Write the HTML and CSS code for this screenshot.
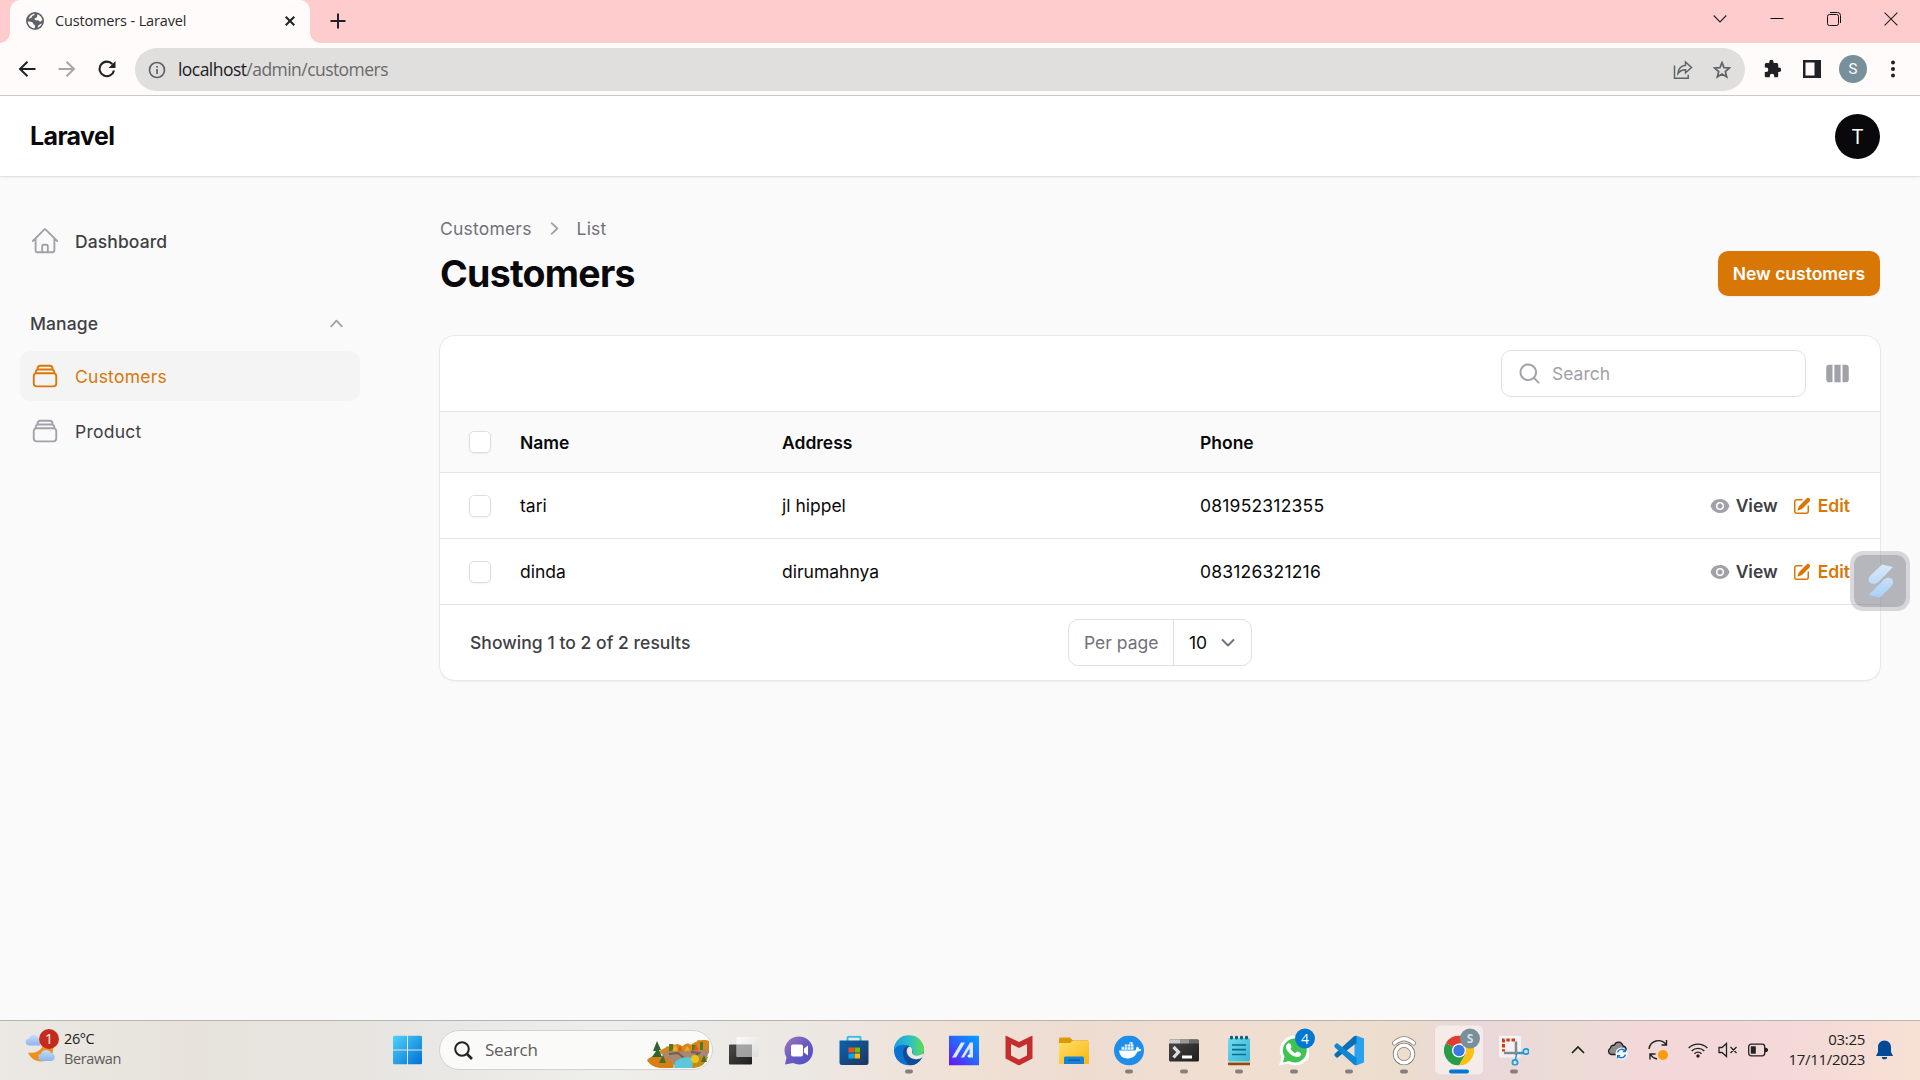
FILE: index.html
```html
<!DOCTYPE html>
<html lang="en">
<head>
<meta charset="utf-8">
<title>Customers - Laravel</title>
<link rel="stylesheet" href="styles.css">
</head>
<body>
<svg class="defs" width="0" height="0">
  <defs>
    <symbol id="stack" viewBox="0 0 24 24"><path fill="none" stroke="currentColor" stroke-width="1.5" stroke-linecap="round" stroke-linejoin="round" d="M6 6.878V6a2.25 2.25 0 012.25-2.25h7.5A2.25 2.25 0 0118 6v.878m-12 0c.235-.083.487-.128.75-.128h10.5c.263 0 .515.045.75.128m-12 0A2.25 2.25 0 004.5 9v.878m13.5-3A2.25 2.25 0 0119.5 9v.878m0 0a2.246 2.246 0 00-.75-.128H5.25c-.263 0-.515.045-.75.128m15 0A2.25 2.25 0 0121 12v6a2.25 2.25 0 01-2.25 2.25H5.25A2.25 2.25 0 013 18v-6c0-.98.626-1.813 1.5-2.122"/></symbol>
    <symbol id="eye" viewBox="0 0 20 20"><path d="M10 12.5a2.5 2.5 0 100-5 2.5 2.5 0 000 5z"/><path fill-rule="evenodd" d="M.664 10.59a1.651 1.651 0 010-1.186A10.004 10.004 0 0110 3c4.257 0 7.893 2.66 9.336 6.41.147.381.146.804 0 1.186A10.004 10.004 0 0110 17c-4.257 0-7.893-2.66-9.336-6.41zM14 10a4 4 0 11-8 0 4 4 0 018 0z"/></symbol>
    <symbol id="pencil" viewBox="0 0 20 20"><path d="M5.433 13.917l1.262-3.155A4 4 0 017.58 9.42l6.92-6.918a2.121 2.121 0 013 3l-6.92 6.918c-.383.383-.84.685-1.343.886l-3.154 1.262a.5.5 0 01-.65-.65z"/><path d="M3.5 5.75c0-.69.56-1.25 1.25-1.25H10A.75.75 0 0010 3H4.75A2.75 2.75 0 002 5.75v9.5A2.75 2.75 0 004.75 18h9.5A2.75 2.75 0 0017 15.25V10a.75.75 0 00-1.5 0v5.25c0 .69-.56 1.25-1.25 1.25h-9.5c-.69 0-1.25-.56-1.25-1.25v-9.5z"/></symbol>
    <linearGradient id="gWin" x1="0" y1="0" x2="1" y2="1"><stop offset="0" stop-color="#4fd3fb"/><stop offset="1" stop-color="#0070d2"/></linearGradient>
    <linearGradient id="gDark" x1="0" y1="0" x2="1" y2="1"><stop offset="0" stop-color="#4a4a4a"/><stop offset="1" stop-color="#1d1d1d"/></linearGradient>
    <linearGradient id="gLight" x1="0" y1="0" x2="1" y2="1"><stop offset="0" stop-color="#ffffff"/><stop offset="1" stop-color="#dcdcdc"/></linearGradient>
    <linearGradient id="gChat" x1="0" y1="0" x2="1" y2="1"><stop offset="0" stop-color="#a07ab8"/><stop offset=".5" stop-color="#6a5bc0"/><stop offset="1" stop-color="#4a4fc4"/></linearGradient>
    <linearGradient id="gStore" x1="0" y1="0" x2="1" y2="1"><stop offset="0" stop-color="#0a63b0"/><stop offset="1" stop-color="#1f355c"/></linearGradient>
    <linearGradient id="gEdge" x1="0" y1="0" x2="1" y2="0"><stop offset="0" stop-color="#1b9de2"/><stop offset=".55" stop-color="#2fc0c4"/><stop offset="1" stop-color="#62dd4c"/></linearGradient>
    <linearGradient id="gMa" x1="1" y1="0" x2="0" y2="1"><stop offset="0" stop-color="#00a5ff"/><stop offset=".5" stop-color="#2a62ff"/><stop offset="1" stop-color="#6a12f0"/></linearGradient>
    <linearGradient id="gFold" x1="0" y1="0" x2="1" y2="1"><stop offset="0" stop-color="#ffdf6a"/><stop offset="1" stop-color="#fbb60c"/></linearGradient>
    <linearGradient id="gNote" x1="0" y1="0" x2="1" y2="1"><stop offset="0" stop-color="#6fdcee"/><stop offset="1" stop-color="#38b4d4"/></linearGradient>
    <linearGradient id="gBlade" x1="0" y1="0" x2="0" y2="1"><stop offset="0" stop-color="#d9e9f8"/><stop offset="1" stop-color="#a9d0f7"/></linearGradient>
    <linearGradient id="gCloud" x1="0" y1="0" x2="0" y2="1"><stop offset="0" stop-color="#c3dcfa"/><stop offset="1" stop-color="#8fb4ea"/></linearGradient>
  </defs>
</svg>

<div class="browser">
  <div class="tabstrip">
    <div class="tab">
      <svg class="favicon" width="18" height="18" viewBox="0 0 18 18"><circle cx="9" cy="9" r="9" fill="#5f6368"/><path fill="#fff9f8" d="M1.800 9.500c2 .1 3.800.2 4.700 1 .9.700.6 1.600 1.300 2.100.8.300 1.300.5 1.200 1.500l-.2 2.200C5 16.300 2 13.200 1.800 9.500zM8.800 1.700c-.3 1.500-1.200 1.600-2.300 2.100-1 .6-.5 1.700-1.500 2.200-1 .3-1.800.600-2.300 1C3.400 4 5.800 1.900 8.800 1.700zM11.500 2.200c2.600.9 4.600 3.200 4.800 6.100-.8.200-1.200 1.400-2.200 1.300-1.200-.2-1.300-1.300-2.500-1.300-1.300.1-2.900.100-3-1.300-.1-1.300 1.100-1.200 2-1.600.9-.6.300-1.900.9-3.200zM15.800 11.500c-.7 2-2 3.500-4 4.300 0-1.300.2-2.300 1.200-2.900 1-.6 1.700-1.100 2.800-1.400z"/></svg>
      <span class="tab-title">Customers - Laravel</span>
      <svg class="tab-close" width="10" height="10" viewBox="0 0 10 10"><path d="M.7.700l8.600 8.600M9.300.700L.7 9.300" stroke="#202124" stroke-width="2"/></svg>
    </div>
    <svg class="newtab" width="16" height="16" viewBox="0 0 16 16"><path d="M8 .5v15M.5 8h15" stroke="#202124" stroke-width="2"/></svg>
    <div class="winctl">
      <svg width="14" height="14" viewBox="0 0 14 14"><path d="M.7 3.500L7 10l6.300-6.500" fill="none" stroke="#222" stroke-width="1.100"/></svg>
      <svg width="14" height="14" viewBox="0 0 14 14"><path d="M.5 6.500h13" stroke="#111"/></svg>
      <svg width="14" height="14" viewBox="0 0 14 14"><rect x=".5" y="2.500" width="11" height="11" rx="2" fill="none" stroke="#111"/><path d="M3 .5h7.500a3 3 0 013 3V11" fill="none" stroke="#111"/></svg>
      <svg width="14" height="14" viewBox="0 0 14 14"><path d="M.6.600l12.800 12.800M13.400.600L.6 13.400" stroke="#222" stroke-width="1.100"/></svg>
    </div>
  </div>
  <div class="toolbar">
    <div class="navbtns">
      <svg width="18" height="18" viewBox="0 0 18 18"><path d="M9.500 1.700L2 9l7.500 7.300M2 9h15.500" fill="none" stroke="#202124" stroke-width="2"/></svg>
      <svg width="18" height="18" viewBox="0 0 18 18"><path d="M8.500 1.700L16 9l-7.500 7.300M16 9H.5" fill="none" stroke="#a9a5a5" stroke-width="2"/></svg>
      <svg width="18" height="18" viewBox="0 0 18 18"><path d="M14.300 4A7.300 7.300 0 1016 10.500" fill="none" stroke="#202124" stroke-width="2.100"/><path d="M17.500 1v7h-7z" fill="#202124"/></svg>
    </div>
    <div class="omnibox">
      <svg width="18" height="18" viewBox="0 0 18 18"><circle cx="9" cy="9" r="7.500" fill="none" stroke="#5f6368" stroke-width="1.700"/><path d="M8.200 8h1.700v5H8.200zM8.200 5h1.700v1.700H8.200z" fill="#5f6368"/></svg>
      <span class="url">localhost<span class="path">/admin/customers</span></span>
      <svg class="share" width="20" height="20" viewBox="0 0 20 20"><path d="M1.500 5.500v12.700h13.700v-3.500" fill="none" stroke="#5f6368" stroke-width="1.500"/><path d="M12.500 2l6 5.500-6 5.300V9.700C9 9.500 7 10.700 5 13.500c.3-4.500 3-7.700 7.500-8.300z" fill="none" stroke="#5f6368" stroke-width="1.500"/></svg>
      <svg width="18" height="18" viewBox="0 0 18 18"><path d="M9 1.600l2 5 5.500.4-4.200 3.500 1.400 5.500L9 13l-4.700 3 1.400-5.500L1.500 7 7 6.600z" fill="none" stroke="#5f6368" stroke-width="1.700"/></svg>
    </div>
    <div class="actions">
      <svg width="20" height="20" viewBox="0 0 20 20"><path fill="#202124" d="M16 8.500h-.8V5.800c0-1-.7-1.700-1.700-1.700h-2.900V3A2.200 2.200 0 006.200 3v1.100H3.400c-.9 0-1.600.7-1.600 1.700v2.700H3a2.300 2.300 0 010 4.600H1.800v3.600c0 .9.700 1.600 1.600 1.600H6.800V17a2.200 2.200 0 014.400 0v1.300h2.300c1 0 1.700-.7 1.700-1.600v-3.800h.8a2.200 2.200 0 000-4.400z"/></svg>
      <svg width="18" height="18" viewBox="0 0 18 18"><rect width="18" height="18" fill="#202124"/><rect x="2.500" y="2.500" width="9" height="13" fill="#fffafa"/></svg>
      <span class="profile">S</span>
      <svg width="4" height="18" viewBox="0 0 4 18"><g fill="#202124"><circle cx="2" cy="2.500" r="2"/><circle cx="2" cy="9" r="2"/><circle cx="2" cy="15.500" r="2"/></g></svg>
    </div>
  </div>
</div>

<header class="topbar">
  <div class="brand">Laravel</div>
  <div class="avatar">T</div>
</header>

<div class="layout">
  <nav class="sidebar">
    <a class="item">
      <svg width="30" height="30" viewBox="0 0 24 24"><path fill="none" stroke="currentColor" stroke-width="1.500" stroke-linecap="round" stroke-linejoin="round" d="M2.250 12l8.954-8.955c.44-.439 1.152-.439 1.591 0L21.750 12M4.500 9.750v10.125c0 .621.504 1.125 1.125 1.125H9.750v-4.875c0-.621.504-1.125 1.125-1.125h2.250c.621 0 1.125.504 1.125 1.125V21h4.125c.621 0 1.125-.504 1.125-1.125V9.750M8.250 21h8.250"/></svg>
      <span>Dashboard</span>
    </a>
    <div class="group">
      <span>Manage</span>
      <svg width="25" height="25" viewBox="0 0 20 20" fill="#a1a1aa"><path d="M14.770 12.790a.75.75 0 01-1.060-.02L10 8.832 6.290 12.770a.75.75 0 11-1.080-1.040l4.250-4.500a.75.75 0 011.080 0l4.250 4.500a.75.75 0 01-.02 1.060z"/></svg>
    </div>
    <div class="items">
      <a class="item active"><svg width="30" height="30"><use href="#stack"/></svg><span>Customers</span></a>
      <a class="item"><svg width="30" height="30"><use href="#stack"/></svg><span>Product</span></a>
    </div>
  </nav>

  <main class="main">
    <div class="crumbs">
      <span>Customers</span>
      <svg width="25" height="25" viewBox="0 0 20 20" fill="#a1a1aa"><path d="M7.210 14.770a.75.75 0 01.02-1.060L11.168 10 7.230 6.290a.75.75 0 111.040-1.080l4.500 4.250a.75.75 0 010 1.080l-4.500 4.250a.75.75 0 01-1.060-.02z"/></svg>
      <span>List</span>
    </div>
    <div class="heading">
      <h1>Customers</h1>
      <a class="btn">New customers</a>
    </div>

    <section class="card">
      <div class="card-tools">
        <div class="search">
          <svg width="25" height="25" viewBox="0 0 20 20" fill="#a1a1aa"><path fill-rule="evenodd" d="M9 3.500a5.500 5.500 0 100 11 5.500 5.500 0 000-11zM2 9a7 7 0 1112.452 4.391l3.328 3.329a.75.75 0 11-1.060 1.060l-3.329-3.328A7 7 0 012 9z"/></svg>
          <span>Search</span>
        </div>
        <svg width="25" height="25" viewBox="0 0 20 20" fill="#a1a1aa"><path d="M14 17h2.750A2.250 2.250 0 0019 14.750v-9.500A2.250 2.250 0 0016.750 3H14v14zM12.500 3h-5v14h5V3zM3.250 3H6v14H3.250A2.250 2.250 0 011 14.750v-9.500A2.250 2.250 0 013.250 3z"/></svg>
      </div>
      <div class="row head">
        <i class="check"></i><span>Name</span><span>Address</span><span>Phone</span>
      </div>
      <div class="row">
        <i class="check"></i><span>tari</span><span>jl hippel</span><span class="num">081952312355</span>
        <div class="links"><a><svg width="20" height="20"><use href="#eye"/></svg>View</a><a class="edit"><svg width="20" height="20"><use href="#pencil"/></svg>Edit</a></div>
      </div>
      <div class="row">
        <i class="check"></i><span>dinda</span><span>dirumahnya</span><span class="num">083126321216</span>
        <div class="links"><a><svg width="20" height="20"><use href="#eye"/></svg>View</a><a class="edit"><svg width="20" height="20"><use href="#pencil"/></svg>Edit</a></div>
      </div>
      <div class="pager">
        <span>Showing 1 to 2 of 2 results</span>
        <div class="perpage">
          <span class="label">Per page</span>
          <span class="value">10 <svg width="14" height="10" viewBox="0 0 14 10"><path d="M1.500 2l5.500 5.500L12.500 2" fill="none" stroke="#6b7280" stroke-width="1.900" stroke-linecap="round" stroke-linejoin="round"/></svg></span>
        </div>
      </div>
    </section>
  </main>
</div>

<div class="floating">
  <svg width="26" height="34" viewBox="0 0 26 34"><path fill="url(#gBlade)" d="M14 .5l11 2.500L11 17.500c-2 2-4.500 2.600-7 2.300C.500 19-.6 14.500 2 12zM25 17c.3 2.300-.4 4-2 5.500L12 33.500.500 31 15 16.500c2-2 4-3 6.500-2.500 2 .3 3.200 1.400 3.500 3z"/></svg>
</div>

<footer class="taskbar">
  <div class="weather">
    <div class="weather-icon">
      <svg width="34" height="34" viewBox="0 0 34 34"><path d="M4 15.500C-1 15 0 8.500 4 8.500 5.500 4 11.500 4 13.500 8l2 7.500z" fill="url(#gCloud)"/><path d="M3 22.500c7 1.500 13-2 15-7l10 1c1 8-4 15-12 15-6 0-11-4-13-9z" fill="#f0901c"/><path d="M15.500 31a4 4 0 01.500-7.500c1.500-4.500 8.500-4.500 10-.5 4.500-.5 5.500 7.500.500 8z" fill="url(#gCloud)"/></svg>
      <span class="badge red">1</span>
    </div>
    <div class="weather-text"><span>26°C</span><span class="dim">Berawan</span></div>
  </div>

  <div class="dock">
    <svg class="start" width="29" height="29" viewBox="0 0 29 29"><path fill="url(#gWin)" d="M1.500 0H14v14H0V1.500A1.500 1.500 0 011.500 0zM15 0h12.500A1.500 1.500 0 0129 1.500V14H15zM0 15h14v14H1.500A1.500 1.500 0 010 27.500zM15 15h14v12.500a1.500 1.500 0 01-1.500 1.500H15z"/></svg>
    <div class="tsearch">
      <svg width="19" height="19" viewBox="0 0 19 19"><circle cx="8" cy="8" r="6.800" fill="none" stroke="#222" stroke-width="2"/><path d="M13 13l5 5" stroke="#222" stroke-width="2.600"/></svg>
      <span>Search</span>
      <svg class="scene" width="63" height="28" viewBox="0 0 63 28">
        <path d="M12 12c3-4 6-3 8-6 3 2 5-3 8-1 3-3 5 1 8 1 3-3 5-3 8-1 2-3 5-2 7-5 3 1 5-1 8 0l3 1v12c-14 5-32 6-46 2z" fill="#d9861c"/>
        <path d="M22 4h4v9h-4zM45 5h4v7h-4zM53 2h3v9h-3z" fill="#517a22"/><path d="M28 4l4 8h-7zM40 6l4 6h-7z" fill="#e8b11c"/><path d="M33 5l3 7h-6zM49 4l3 7h-6z" fill="#e05a1e"/>
        <path d="M17 12c10-2 16 0 22-1 8 0 15-2 23-1l-2 8-14 7H27L15 17z" fill="#a88873"/><path d="M22 14l9-1 6 5M44 12l8 1-6 5" stroke="#7b5a4c" stroke-width="2" fill="none"/>
        <path d="M0 20c3-4 9-5 14-4 6 1 11 5 13 10l-1 2H13C6 27 2 24 0 20z" fill="#d77e16"/><path d="M40 21c6-5 14-5 21-4-2 6-6 10-14 11h-7z" fill="#c58a16"/>
        <path d="M28 22c4-4 11-6 18-4-3 2 1 4-1 10H27z" fill="#5cc6dc"/>
        <path d="M10 1l4 9h-2l3 7H5l4-6H6z" fill="#2f6430"/><path d="M16 15l3 8h-7zM57 15l3 7h-6z" fill="#3d7032"/><circle cx="48" cy="19" r="4" fill="#e5c51f"/>
      </svg>
    </div>
    <div class="apps">
      <div class="app"><svg width="30" height="30" viewBox="0 0 30 30"><rect y="9" width="23" height="20" rx="1" fill="url(#gDark)"/><rect x="7.500" y="1.500" width="22" height="20" rx="1" fill="url(#gLight)" opacity=".85"/><path d="M7.500 9H23v12.500H7.500z" fill="#8a8a8a" opacity=".65"/></svg></div>
      <div class="app"><svg width="30" height="30" viewBox="0 0 30 30"><path d="M15 1a14 14 0 110 28c-2 0-4-.5-6-1.400L1 29l1.500-7A14 14 0 0115 1z" fill="url(#gChat)"/><rect x="7" y="9" width="12" height="12" rx="2" fill="#fff"/><path d="M20 13l4-3v10l-4-3z" fill="#fff"/></svg></div>
      <div class="app"><svg width="30" height="30" viewBox="0 0 30 30"><path d="M8.500 6V2.200a1 1 0 011-1h11a1 1 0 011 1V6" fill="none" stroke="#35bdf0" stroke-width="2"/><path d="M.500 5h29v22a2.500 2.500 0 01-2.500 2.500H3A2.500 2.500 0 01.500 27z" fill="url(#gStore)"/><path d="M9.500 12H15v5H9.500z" fill="#f25022"/><path d="M15.500 12H21v5h-5.500z" fill="#7fba00"/><path d="M9.500 18H15v5H9.500z" fill="#00a4ef"/><path d="M15.500 18H21v5h-5.500z" fill="#ffb900"/></svg></div>
      <div class="app"><svg width="30" height="30" viewBox="0 0 30 30"><circle cx="15" cy="15" r="15" fill="#0c72cf"/><path d="M0 15A15 15 0 0130 14c0 4-3 6-7 6-3 0-5-1-5-2.500 1-1 1-6-4-7.500C8 8 2 10 0 15z" fill="url(#gEdge)"/><path d="M9 17c0-4 3-7 6-6-4 3-3 10 2 12 4 2 8 1 11-.5C25 27 21 30 16 30 12 28 9 23 9 17z" fill="#124c97"/><path d="M14 12c2-2 5 1 4 4-.500 2 1 4 5 4 3 0 5-1 6.500-2.500.3 2-.3 3.500-1.500 4.500-3 2-8 2.500-11.500 0-3.500-2.500-5-7-2.500-10z" fill="#f2e6de"/></svg><b></b></div>
      <div class="app"><svg width="30" height="30" viewBox="0 0 30 30"><rect width="30" height="30" fill="url(#gMa)"/><path d="M3 22L12 7h4L7 22zM12 22l9-15h3v15h-3.500v-9L15 22z" fill="#dfe6ff"/><circle cx="20" cy="20.500" r="1.500" fill="#fff"/></svg></div>
      <div class="app"><svg width="30" height="30" viewBox="0 0 30 30"><path d="M1.500 0L15 6.500 28.500 0v23L15 30 1.500 23zM7 8.500v11.500l8 4 8-4V8.500l-8 4z" fill="#c32e2e"/></svg></div>
      <div class="app"><svg width="30" height="30" viewBox="0 0 30 30"><path d="M0 3.500A1.500 1.500 0 011.500 2H11l3 3h14.500A1.500 1.500 0 0130 6.500V12H0z" fill="#dc9a08"/><path d="M0 7.500h11l2-2h17v23H0z" fill="url(#gFold)"/><path d="M5 28.500v-6a1.500 1.500 0 011.500-1.500h17a1.500 1.500 0 011.500 1.500v6z" fill="#1583d8"/><path d="M9 24.700h12" stroke="#0b55a5" stroke-width="1.300"/></svg></div>
      <div class="app"><svg width="30" height="30" viewBox="0 0 30 30"><circle cx="15" cy="15" r="15" fill="#1d8fea"/><path d="M5 15h16c1.500-1 1-2.500 2-4 1.500.5 2 1.500 2 2.500 1 0 2 0 2.500.5-1 2-3 2-4 2-2 5-6 7-10 7-5 0-8-3-8.500-8z" fill="#fff"/><path d="M7.500 11h12v3.200h-12zM10.500 9h9v3h-9zM15.500 6.500h3v3h-3z" fill="#e4f2fe"/><path d="M10.500 9v5M13.500 9v5M16.500 7v7M7.500 11.300h12" stroke="#1d8fea" stroke-width=".5"/></svg><b></b></div>
      <div class="app"><svg width="30" height="30" viewBox="0 0 30 30"><rect y="4" width="30" height="22" rx="1.500" fill="url(#gDark)"/><path d="M1.500 4H11v4H0V5.500A1.500 1.500 0 011.500 4z" fill="#ccc"/><path d="M11 4h9v4h-9z" fill="#999"/><path d="M20 4h8.500A1.500 1.500 0 0130 5.500V8H20z" fill="#686868"/><path d="M4.500 11.500l5 5-5 5.500" fill="none" stroke="#ddd" stroke-width="3.200"/><path d="M13 20h10v3H13z" fill="#fff"/></svg><b></b></div>
      <div class="app"><svg width="30" height="30" viewBox="0 0 30 30"><rect x="4" y="25" width="22" height="5" rx="1" fill="#8d4c12"/><rect x="4" y="24" width="22" height="3" fill="#eee"/><rect x="4" y="2.500" width="22" height="23.500" rx="1.500" fill="url(#gNote)"/><path d="M8 9.500h14M8 14.200h14M8 19h14" stroke="#0d6b8c" stroke-width="1.700"/><path d="M7.500 1.500v1M12.500 1.500v1M17.500 1.500v1M22.500 1.500v1" stroke="#0d5d7a" stroke-width="3" stroke-linecap="round"/></svg><b></b></div>
      <div class="app"><svg width="30" height="30" viewBox="0 0 30 30"><path d="M15 0a15 15 0 11-6 28L0 30l2.500-8A15 15 0 0115 0z" fill="#fff"/><path d="M15 3a12 12 0 11-5 22.500L4 27l1.500-6A12 12 0 0115 3z" fill="#3fc351"/><path d="M9 8c2-1 2.500 0 3.500 3 .3 1-1 1.500-1 2 1 2.500 3 4 5 4.500.7-.2 1.200-1.800 2-1.500 3 1.300 4 1.500 3.500 3-1 3-4 3-7 1.800-4.500-2-8-6.300-8-9.300C7 10 7.700 8.700 9 8z" fill="#fff"/></svg><span class="badge blue">4</span><b></b></div>
      <div class="app"><svg width="30" height="30" viewBox="0 0 30 30"><path d="M22 0l8 3v24l-8 3-1.500-1V8z" fill="#28a1ee"/><path d="M22.500 7.500L3 22.500.5 20.300V18.500L20 .7 22.500 0z" fill="#0a6fb5"/><path d="M22.500 22.500L3 7.500.500 9.600v2L20 29.300l2.500.7z" fill="#0e86d2"/></svg><b></b></div>
      <div class="app"><svg width="30" height="30" viewBox="0 0 30 30"><g fill="none"><circle cx="15" cy="18.500" r="8.700" stroke="#858078" stroke-width="5"/><path d="M5.500 7.500Q15-1 24.500 7.500" stroke="#858078" stroke-width="5" stroke-linecap="round"/><circle cx="15" cy="18.500" r="8.700" stroke="#fff" stroke-width="3.400"/><path d="M5.500 7.500Q15-1 24.500 7.500" stroke="#fff" stroke-width="3.400" stroke-linecap="round"/></g></svg><b></b></div>
      <div class="app current"><svg width="30" height="30" viewBox="0 0 30 30"><path d="M15 15L2 7.500A15 15 0 0128 7.500z" fill="#e23c32"/><path d="M2 7.500A15 15 0 0015 30l6.500-11.500L15 15z" fill="#2a9c48"/><path d="M15 30A15 15 0 0028 7.500H15l6.500 11z" fill="#fbc116"/><circle cx="15" cy="15" r="7" fill="#fff"/><circle cx="15" cy="15" r="5.700" fill="#3b78e7"/></svg><span class="badge gray">S</span><b></b></div>
      <div class="app"><svg width="30" height="30" viewBox="0 0 30 30"><rect width="22" height="22" rx="2" fill="#f3f3f3"/><path d="M16 4.500H4.500V16" fill="none" stroke="#d43c0c" stroke-width="3" stroke-dasharray="3.500 1.700"/><path d="M17 6v13.500M5 17.500h19" stroke="#7f8a94" stroke-width="2.500"/><circle cx="27" cy="16" r="2.700" fill="none" stroke="#1c9be0" stroke-width="1.700"/><circle cx="16" cy="27" r="2.600" fill="none" stroke="#1c9be0" stroke-width="1.700"/><path d="M16.500 24l1-5M24 17.500l-5 0" stroke="#1c9be0" stroke-width="1.500"/></svg><b></b></div>
    </div>
  </div>

  <div class="tray">
    <svg class="t-up" width="14" height="10" viewBox="0 0 14 10"><path d="M1 8l6-6 6 6" fill="none" stroke="#222" stroke-width="1.700"/></svg>
    <svg class="t-cloud" width="21" height="20" viewBox="0 0 21 20"><path d="M4 14.500a3.500 3.500 0 01-.500-6.500C4 5 6 5 7.500 5c1.500-4 7-4 8.500 1 3.500.5 4.500 5 2 7l-2 1.500z" fill="#8e8b8d" stroke="#1c1c1c" stroke-width="1.300"/><circle cx="14.500" cy="13.500" r="6" fill="#fff"/><path d="M10.500 12.500a4.200 4.200 0 017.600-1.300M18.500 14.500a4.200 4.200 0 01-7.600 1.300M18.400 9v2.600h-2.600M10.600 18.200v-2.600h2.600" fill="none" stroke="#1874ce" stroke-width="1.300"/></svg>
    <svg class="t-sync" width="21" height="22" viewBox="0 0 21 22"><path d="M1 10A9.500 9.500 0 0118 5.500M18.500 1v5h-5M2 20.500V15h5.500M2.500 15.500A9.500 9.500 0 009 20" fill="none" stroke="#222" stroke-width="1.400"/><circle cx="15" cy="16" r="5" fill="#ff9a0a"/></svg>
    <svg class="t-wifi" width="20" height="16" viewBox="0 0 20 16"><g fill="none" stroke="#222" stroke-width="1.400"><path d="M.700 6a13.200 13.200 0 0118.600 0M3.700 8.900a9 9 0 0112.600 0M6.500 11.700a5 5 0 017 0"/></g><circle cx="10" cy="14" r="1.700" fill="#222"/></svg>
    <svg class="t-vol" width="20" height="16" viewBox="0 0 20 16"><path d="M1 5.500h3L8.500 1.500v13L4 10.500H1zM12.500 5l6 6M18.500 5l-6 6" fill="none" stroke="#222" stroke-width="1.300"/></svg>
    <svg class="t-bat" width="20" height="14" viewBox="0 0 20 14"><rect x=".700" y="1.200" width="16" height="11.600" rx="2.500" fill="none" stroke="#222" stroke-width="1.300"/><rect x="2.800" y="3.300" width="5" height="7.400" fill="#222"/><path d="M17.500 5l2 1v2l-2 1z" fill="#222" stroke="#222"/></svg>
    <div class="clock"><span>03:25</span><span>17/11/2023</span></div>
    <svg class="t-bell" width="17" height="20" viewBox="0 0 17 20"><path d="M8.500.500c4 0 6.500 3 6.500 6.500v5l2 4H0l2-4V7C2 3.500 4.500.500 8.500.500zM5.700 17h5.600c-.5 2-1.500 2.300-2.800 2.300S6.200 19 5.700 17z" fill="#004a98"/></svg>
  </div>
</footer>
</body>
</html>
```
FILE: styles.css
```css
* { box-sizing: border-box; }
body {
  margin: 0;
  width: 1920px;
  height: 1080px;
  overflow: hidden;
  display: flex;
  flex-direction: column;
  background: #fafafa;
  color: #09090b;
  font-family: Inter, "Liberation Sans", sans-serif;
  font-size: 17.5px;
  line-height: 25px;
}
svg { display: block; flex: none; }
.defs { position: absolute; }
span { white-space: nowrap; }

/* browser window */
.browser {
  flex: none;
  height: 96px;
  background: #fffbfa;
  border-bottom: 1px solid #cdc7c6;
  font-family: "Open Sans", "Noto Sans", sans-serif;
}
.tabstrip {
  height: 43px;
  display: flex;
  align-items: center;
  background: #ffcccd;
}
.tab {
  position: relative;
  align-self: stretch;
  width: 300px;
  margin-left: 10px;
  padding: 0 15px 1px 16px;
  display: flex;
  align-items: center;
  background: #fffbfa;
  border-radius: 10px 10px 0 0;
}
.tab::before, .tab::after {
  content: "";
  position: absolute;
  bottom: 0;
  width: 10px;
  height: 10px;
}
.tab::before { left: -10px; background: radial-gradient(circle at 0 0, #ffcccd 9.5px, #fffbfa 10px); }
.tab::after { right: -10px; background: radial-gradient(circle at 100% 0, #ffcccd 9.5px, #fffbfa 10px); }
.tab-title {
  margin: -1px 0 0 11px;
  font-size: 14.5px;
  letter-spacing: -0.15px;
  color: #2c2a2b;
}
.tab-close { margin-left: auto; }
.newtab { margin: -1px 0 0 20px; }
.winctl {
  margin: -6px 22px 0 auto;
  display: flex;
  gap: 43px;
}
.toolbar {
  height: 52px;
  display: flex;
  align-items: center;
}
.navbtns { display: flex; gap: 22px; margin: -1px 0 0 18px; }
.omnibox {
  width: 1610px;
  height: 43px;
  margin: 1px 0 0 19px;
  padding: 0 14px 0 13px;
  display: flex;
  align-items: center;
  background: #e0dfdd;
  border-radius: 22px;
}
.url { margin: -1px 0 0 12px; font-size: 17.5px; letter-spacing: -0.55px; color: #202124; }
.path { color: #696a6b; }
.share { margin: 0 20px 0 auto; }
.actions { display: flex; align-items: center; margin: -1px 0 0 18px; }
.actions svg:nth-child(2) { margin-left: 20px; }
.profile {
  width: 28px;
  height: 28px;
  margin: 0 24px 0 18px;
  border-radius: 50%;
  background: #78909c;
  color: #fff;
  font-family: Roboto, sans-serif;
  font-size: 15px;
  line-height: 28px;
  text-align: center;
}

/* application header */
.topbar {
  flex: none;
  height: 80px;
  padding: 0 40px 0 30px;
  display: flex;
  align-items: center;
  justify-content: space-between;
  background: #fff;
  box-shadow: 0 0 0 1px rgba(9, 9, 11, .05), 0 1px 3px rgba(0, 0, 0, .08);
  clip-path: inset(0 0 -4px 0);
}
.brand { font-size: 25px; font-weight: 700; letter-spacing: -0.63px; }
.avatar {
  width: 45px;
  height: 45px;
  border-radius: 50%;
  background: #09090b;
  color: #fff;
  font-size: 19.5px;
  line-height: 46px;
  text-align: center;
}

.layout { flex: 1; display: flex; min-height: 0; }

/* sidebar */
.sidebar { width: 400px; padding: 40px 40px 0 20px; font-weight: 500; letter-spacing: 0.1px; color: #3f3f46; }
.item {
  height: 50px;
  padding: 0 10px;
  display: flex;
  align-items: center;
  gap: 15px;
  border-radius: 10px;
}
.item svg { color: #a1a1aa; }
.item.active { background: #f4f4f5; }
.item.active, .item.active svg { color: #d97706; }
.items { display: flex; flex-direction: column; gap: 5px; letter-spacing: 0.25px; }
.items .item { font-weight: 400; }
.group {
  height: 25px;
  margin: 45px 11px 15px 10px;
  display: flex;
  justify-content: space-between;
}

/* page */
.main { width: 1480px; padding: 40px 0 0 40px; }
.crumbs { display: flex; align-items: center; gap: 10px; letter-spacing: 0.2px; color: #71717a; }
.heading {
  height: 45px;
  margin: 10px 0 40px;
  display: flex;
  align-items: center;
  justify-content: space-between;
}
h1 { margin: 0; font-size: 37.5px; line-height: 45px; font-weight: 700; letter-spacing: -0.72px; }
.btn {
  height: 45px;
  padding: 0 15px;
  line-height: 45px;
  border-radius: 10px;
  background: #d97706;
  color: #fff;
  font-weight: 600;
  box-shadow: 0 1px 2px rgba(0, 0, 0, .06);
}
.card {
  background: #fff;
  border-radius: 15px;
  overflow: hidden;
  box-shadow: 0 0 0 1px #e9e9ea, 0 1px 3px rgba(0, 0, 0, .08);
}
.card-tools {
  height: 75px;
  padding-right: 30px;
  display: flex;
  align-items: center;
  justify-content: flex-end;
  gap: 19px;
}
.search {
  width: 305px;
  height: 47px;
  padding: 0 15px;
  display: flex;
  align-items: center;
  gap: 10px;
  border: 1px solid #e0e0e1;
  border-radius: 10px;
  color: #a1a1aa;
}
.row {
  height: 66px;
  padding: 0 30px 0 29px;
  display: grid;
  grid-template-columns: 51px 262px 418px 1fr auto;
  align-items: center;
  border-top: 1px solid #e4e4e7;
}
.row.head { height: 61px; background: #fafafa; font-weight: 600; }
.num { letter-spacing: 0.2px; }
.check {
  width: 22px;
  height: 22px;
  border: 1px solid #dededf;
  border-radius: 5px;
  background: #fff;
  box-shadow: 0 1px 2px rgba(0, 0, 0, .05);
}
.links { display: flex; gap: 15px; font-weight: 600; color: #3f3f46; }
.links a { display: flex; align-items: center; gap: 6px; }
.links a:first-child { margin-right: -1px; }
.links svg { fill: #a1a1aa; }
.links .edit, .links .edit svg { color: #d97706; fill: #d97706; }
.pager {
  height: 76px;
  padding: 0 30px;
  display: grid;
  grid-template-columns: 1fr auto 1fr;
  align-items: center;
  border-top: 1px solid #e4e4e7;
}
.pager > span { font-weight: 500; letter-spacing: 0.04px; color: #3f3f46; }
.perpage {
  height: 47px;
  display: flex;
  align-items: stretch;
  line-height: 45px;
  border: 1px solid #e0e0e1;
  border-radius: 10px;
}
.perpage .label { width: 105px; padding-left: 15px; border-right: 1px solid #e0e0e1; color: #71717a; }
.perpage .value { width: 77px; padding: 0 16px 0 15px; display: flex; align-items: center; justify-content: space-between; }

/* floating widget over the page */
.floating {
  position: absolute;
  left: 1850px;
  top: 551px;
  width: 60px;
  height: 60px;
  padding-left: 1px;
  display: flex;
  align-items: center;
  justify-content: center;
  border: 4px solid rgba(160, 161, 170, .4);
  border-radius: 13px;
  background: rgba(134, 135, 145, .6);
  background-clip: padding-box;
}

/* taskbar */
.taskbar {
  flex: none;
  position: relative;
  height: 60px;
  display: flex;
  align-items: center;
  justify-content: space-between;
  border-top: 1px solid #b8b3b0;
  background: linear-gradient(90deg, #ebe9e4 0, #e7e2dc 190px, #e8e6e2 400px, #eeeeea 600px, #ece8e4 800px, #f0e1d5 960px, #eedcd1 1080px, #f0dfd1 1250px, #ecddcd 1400px, #ead7da 1480px, #ecdcd5 1560px, #f4d7d9 1680px, #f4d9d8 1790px, #f7e1d4 1920px);
  font-family: "Open Sans", "Noto Sans", sans-serif;
  font-size: 15px;
  line-height: 20px;
}
.weather { width: 391px; padding: 0 0 0 25px; display: flex; align-items: center; gap: 5px; margin-top: -3px; }
.weather-icon { position: relative; margin-top: -5px; }
.weather-text { display: flex; flex-direction: column; font-size: 14.5px; letter-spacing: -0.4px; color: #1b1b1b; }
.dim { color: #5c5a58; }
.badge {
  position: absolute;
  width: 20px;
  height: 20px;
  border-radius: 50%;
  color: #fff;
  font-size: 14px;
  line-height: 20px;
  text-align: center;
}
.badge.red { left: 14px; top: -1px; background: #c42b1c; }
.badge.blue { left: 25px; top: 3px; background: #0078d4; }
.badge.gray { left: 25px; top: 3px; background: #78909c; color: #d7dee2; font-weight: 700; font-size: 12px; }
.dock { display: flex; align-items: center; margin-right: auto; }
.start { margin-left: 2px; }
.apps, .start { transform: translateY(-.5px); }
.tsearch {
  position: relative;
  width: 274px;
  height: 40px;
  margin: -1px 0 0 17px;
  padding-left: 14px;
  display: flex;
  align-items: center;
  gap: 12px;
  border: 1px solid #d5d3d0;
  border-radius: 20px;
  background: #fafaf8;
  color: #5d5c5b;
  font-size: 17px;
  letter-spacing: -0.2px;
}
.scene { margin: 7px 2px 0 auto; }
.apps { display: flex; gap: 7px; margin-left: 7px; }
.app {
  position: relative;
  width: 48px;
  height: 49px;
  display: flex;
  align-items: center;
  justify-content: center;
  border-radius: 5px;
}
.app.current { background: #f5ebe9; box-shadow: 0 0 0 1px #e6dad7; }
.app b {
  position: absolute;
  left: 20px;
  bottom: 1px;
  width: 8px;
  height: 4px;
  border-radius: 2px;
  background: #86807b;
}
.app.current b { left: 14px; width: 20px; background: #0078d4; }
.tray { display: flex; align-items: center; margin-top: -1px; }
.t-cloud { margin-left: 22px; }
.t-sync { margin-left: 20px; }
.t-wifi { margin-left: 19px; }
.t-vol { margin-left: 10px; }
.t-bat { margin-left: 10px; }
.clock { width: 97px; margin-top: -3px; display: flex; flex-direction: column; align-items: flex-end; letter-spacing: -0.3px; color: #222; }
.t-bell { margin: 0 27px 0 11px; }
```
